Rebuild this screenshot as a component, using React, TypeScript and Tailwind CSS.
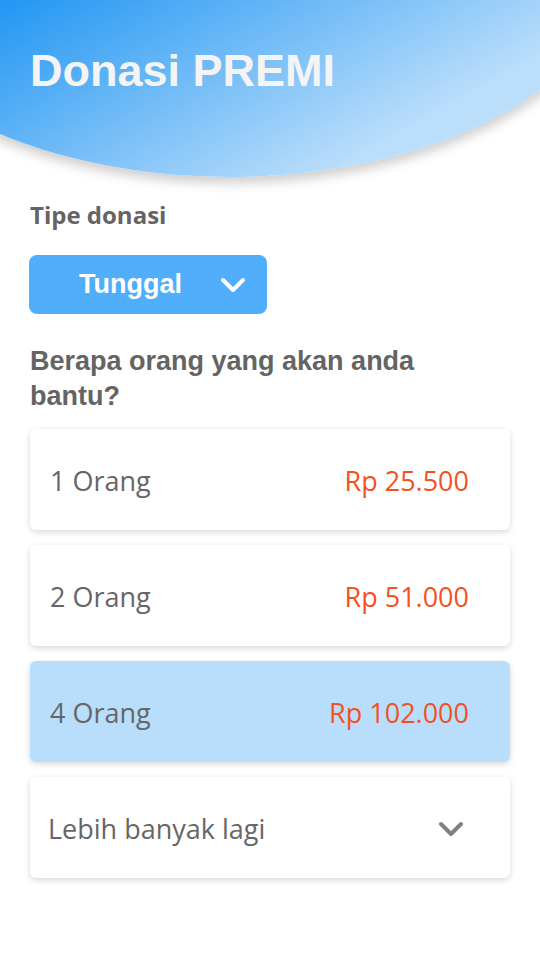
const options = [
  { label: '1 Orang', price: 'Rp 25.500', active: false },
  { label: '2 Orang', price: 'Rp 51.000', active: false },
  { label: '4 Orang', price: 'Rp 102.000', active: true },
];

const Chevron = ({ className }: { className?: string }) => (
  <svg viewBox="0 0 26 16" className={className} fill="none" stroke="currentColor" strokeWidth={4} strokeLinecap="round" strokeLinejoin="round">
    <path d="M3 3l10 10L23 3" />
  </svg>
);

export default function App() {
  return (
    <div className="relative w-[540px] min-h-[960px] overflow-hidden bg-white">
      <header className="relative h-[177px]">
        <div className="absolute left-[-170px] top-[-295px] w-[800px] h-[472px] rounded-[50%] bg-[linear-gradient(151deg,#2196f3_0%,#bbdefb_75%)] bg-no-repeat bg-[length:540px_177px] bg-[position:170px_295px] shadow-[0_6px_12px_rgba(0,0,0,0.2)]" />
        <h1 className="relative pl-[30px] pt-[45px] text-[45px] leading-[52px] font-bold text-[#f4f4f4] font-['Liberation_Sans',Arial,sans-serif]">
          Donasi PREMI
        </h1>
      </header>

      <main className="px-[30px] pb-10">
        <p className="mt-[23px] text-[24px] leading-[30px] font-bold text-[#646464] font-['Open_Sans',sans-serif]">
          Tipe donasi
        </p>

        <button className="mt-[25px] -ml-px flex h-[59px] w-[238px] items-center justify-between rounded-lg bg-[#51aefa] pl-[50px] pr-[21px] text-white">
          <span className="text-[27px] font-bold font-['Liberation_Sans',Arial,sans-serif]">Tunggal</span>
          <Chevron className="h-[16px] w-[26px]" />
        </button>

        <h2 className="mt-[30px] max-w-[450px] text-[27px] leading-[35px] font-bold text-[#646464] font-['Liberation_Sans',Arial,sans-serif]">
          Berapa orang yang akan anda bantu?
        </h2>

        <div className="mt-[15px] flex flex-col gap-[15px] font-['Open_Sans',sans-serif]">
          {options.map((o) => (
            <div
              key={o.label}
              className={`flex h-[101px] items-center justify-between rounded-md pl-[20px] pr-[41px] pt-[3px] shadow-[0_2px_6px_rgba(0,0,0,0.16)] ${
                o.active ? 'bg-[#b8defc]' : 'bg-white'
              }`}
            >
              <span className="text-[27px] text-[#666666]">{o.label}</span>
              <span className="text-[27px] text-[#f4511e]">{o.price}</span>
            </div>
          ))}
          <div className="flex h-[101px] items-center justify-between rounded-md bg-white pl-[18px] pr-[46px] pt-[3px] shadow-[0_2px_6px_rgba(0,0,0,0.16)]">
            <span className="text-[27px] text-[#666666]">Lebih banyak lagi</span>
            <Chevron className="h-[16px] w-[26px] text-[#808080]" />
          </div>
        </div>
      </main>
    </div>
  );
}
